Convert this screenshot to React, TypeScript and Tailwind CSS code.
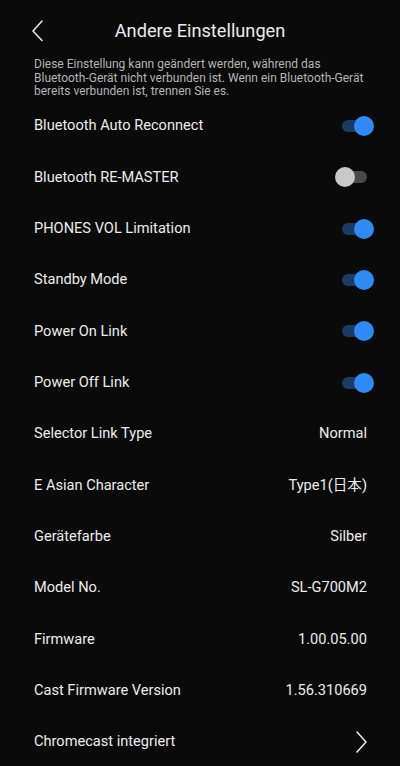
type Row =
  | { label: string; kind: "toggle"; on: boolean }
  | { label: string; kind: "value"; value: string }
  | { label: string; kind: "link" };

const rows: Row[] = [
  { label: "Bluetooth Auto Reconnect", kind: "toggle", on: true },
  { label: "Bluetooth RE-MASTER", kind: "toggle", on: false },
  { label: "PHONES VOL Limitation", kind: "toggle", on: true },
  { label: "Standby Mode", kind: "toggle", on: true },
  { label: "Power On Link", kind: "toggle", on: true },
  { label: "Power Off Link", kind: "toggle", on: true },
  { label: "Selector Link Type", kind: "value", value: "Normal" },
  { label: "E Asian Character", kind: "value", value: "Type1(日本)" },
  { label: "Gerätefarbe", kind: "value", value: "Silber" },
  { label: "Model No.", kind: "value", value: "SL-G700M2" },
  { label: "Firmware", kind: "value", value: "1.00.05.00" },
  { label: "Cast Firmware Version", kind: "value", value: "1.56.310669" },
  { label: "Chromecast integriert", kind: "link" },
];

function Toggle({ on }: { on: boolean }) {
  return (
    <div
      className={
        "relative h-3 w-[25px] rounded-full " +
        (on ? "bg-[#1d3b60]" : "bg-[#4a4a4a]")
      }
    >
      <span
        className={
          "absolute top-1/2 h-5 w-5 -translate-y-1/2 rounded-full " +
          (on ? "right-[-7px] bg-[#2f8af5]" : "left-[-7px] bg-[#c9c9c9]")
        }
      />
    </div>
  );
}

export default function App() {
  return (
    <div
      className="h-[766px] w-[400px] overflow-hidden bg-[#0a0a0a] text-[#ececec]"
      style={{ fontFamily: "Roboto, 'Noto Sans CJK JP', sans-serif" }}
    >
      <header className="relative flex h-[58px] items-center justify-center">
        <svg
          className="absolute left-[30px] top-[19px]"
          width="14"
          height="24"
          viewBox="0 0 14 24"
          fill="none"
          stroke="#e6e6e6"
          strokeWidth="1.6"
          strokeLinecap="round"
          strokeLinejoin="round"
        >
          <polyline points="12,2 3,12 12,21.5" />
        </svg>
        <h1 className="mt-[4px] text-[18.2px]">Andere Einstellungen</h1>
      </header>
      <p className="px-[34px] text-[12px] leading-[13.5px] text-[#b4b4b4]">
        Diese Einstellung kann geändert werden, während das Bluetooth-Gerät
        nicht verbunden ist. Wenn ein Bluetooth-Gerät bereits verbunden ist,
        trennen Sie es.
      </p>
      <ul className="mt-[2px]">
        {rows.map((r) => (
          <li
            key={r.label}
            className="flex h-[51.33px] items-center justify-between pl-[34px] pr-[33px] text-[14.6px]"
          >
            <span>{r.label}</span>
            {r.kind === "toggle" && <Toggle on={r.on} />}
            {r.kind === "value" && <span>{r.value}</span>}
            {r.kind === "link" && (
              <svg
                width="12"
                height="22"
                viewBox="0 0 12 22"
                fill="none"
                stroke="#e6e6e6"
                strokeWidth="1.6"
                strokeLinecap="round"
                strokeLinejoin="round"
              >
                <polyline points="2,1 11,11 2,21" />
              </svg>
            )}
          </li>
        ))}
      </ul>
    </div>
  );
}
